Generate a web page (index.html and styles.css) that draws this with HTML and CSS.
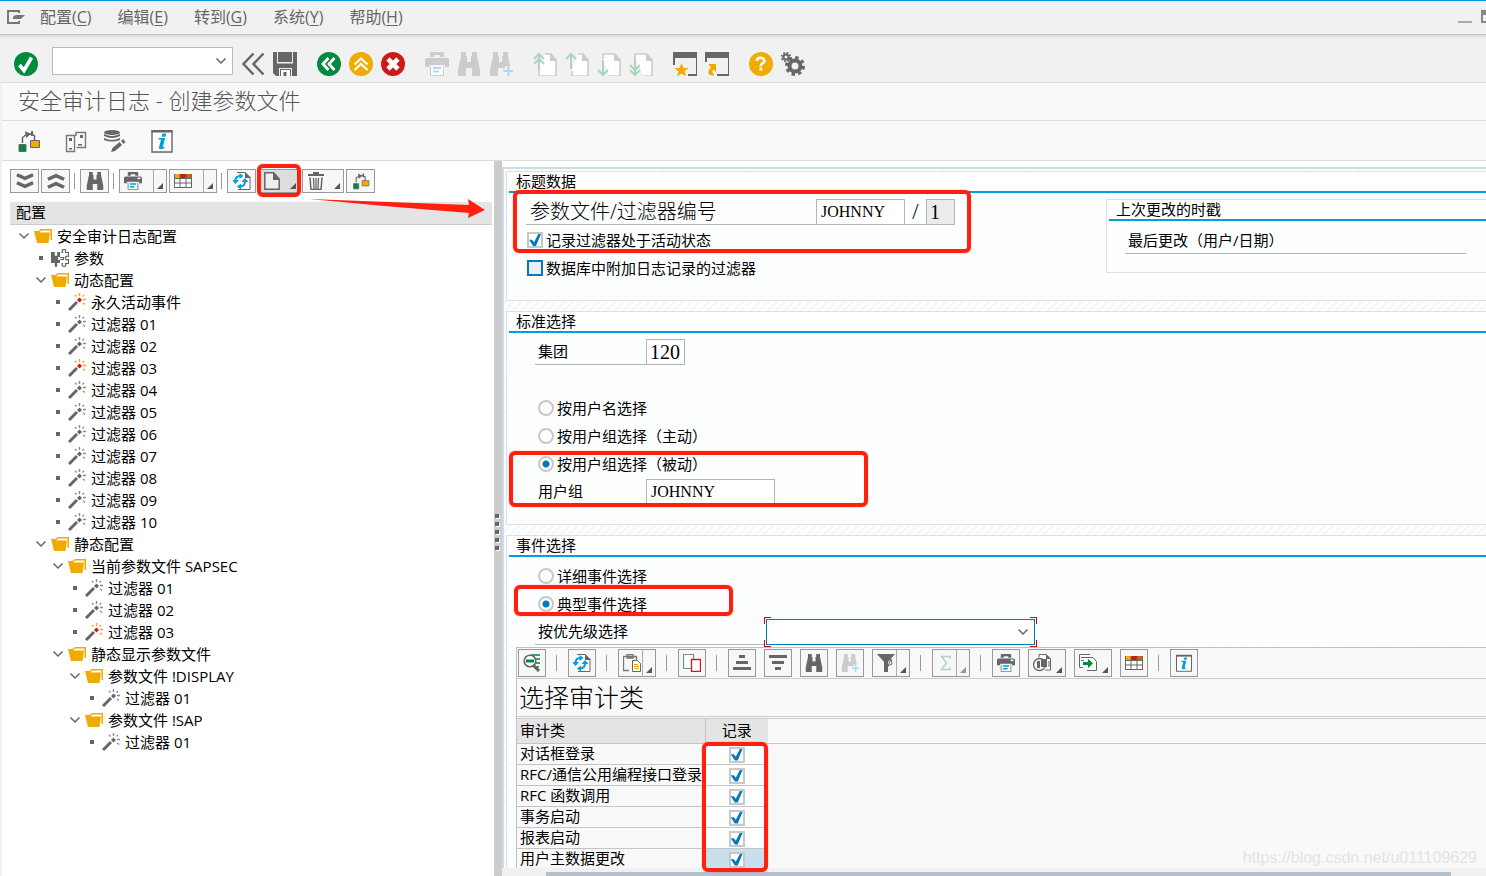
FILE: index.html
```html
<!DOCTYPE html>
<html lang="zh-CN">
<head>
<meta charset="utf-8">
<title>安全审计日志 - 创建参数文件</title>
<link rel="stylesheet" href="styles.css">
</head>
<body>
<svg class="sprite" aria-hidden="true">
  <symbol id="exit" viewBox="0 0 18 14"><path d="M12 1H1v12h11" fill="none" stroke="currentColor" stroke-width="2"/><path d="M12 0v3M12 11v3" stroke="currentColor" stroke-width="2"/><path d="M6 7q1-2 4-2h8l-4 4H6z" fill="currentColor"/></symbol>
  <symbol id="ok" viewBox="0 0 24 24"><circle cx="12" cy="12" r="12" fill="#008a3b"/><path d="M5.500 13l4.500 5.500L17.500 5.500" fill="none" stroke="#fff" stroke-width="3.600"/></symbol>
  <symbol id="first" viewBox="0 0 24 24"><path d="M12.500 1.500L2.500 12l10 10.500M22.500 1.500L12.500 12l10 10.500" fill="none" stroke="#666" stroke-width="2.500"/></symbol>
  <symbol id="save" viewBox="0 0 24 24"><path d="M0 0h4v11h16V0h4v24h-5v-8H6v8H3l-3-3z" fill="#666"/><path d="M5 0h14v10H5z" fill="#666"/><path d="M4 0h1v11H4zM19 0h1v11h-1zM4 10h16v1.500H4z" fill="#eee"/><path d="M7 17h11v7H7z" fill="#666"/><path d="M8 18h9v6H8z" fill="#fff"/><path d="M10.500 20h3v4h-3z" fill="#666"/></symbol>
  <symbol id="back" viewBox="0 0 24 24"><circle cx="12" cy="12" r="12" fill="#008a3b"/><path d="M11.500 6L6 12l5.500 6M17.500 6L12 12l5.500 6" fill="none" stroke="#fff" stroke-width="2.800"/></symbol>
  <symbol id="up" viewBox="0 0 24 24"><circle cx="12" cy="12" r="12" fill="#f0ab00"/><path d="M5.500 12.500L12 6.500l6.500 6M5.500 18L12 12l6.500 6" fill="none" stroke="#fff" stroke-width="2.300"/></symbol>
  <symbol id="cancel" viewBox="0 0 24 24"><circle cx="12" cy="12" r="12" fill="#cc1919"/><path d="M7 7l10 10M17 7L7 17" stroke="#fff" stroke-width="4.600"/></symbol>
  <symbol id="print" viewBox="0 0 24 24"><path d="M5 5V1.500Q5 0 6.500 0h11Q19 0 19 1.500V5h-4V3H9v2zM2 6h20q2 0 2 2v7h-4v-2H4v2H0V8q0-2 2-2z" fill="currentColor"/><path d="M18 7.500h4v2h-4z" fill="var(--dot,#fff)"/><path d="M5.500 14.500v9h13v-9" fill="#fff" stroke="currentColor"/><path d="M8 16h8M8 19.500h6" stroke="var(--accent,#009de0)" stroke-width="2"/></symbol>
  <symbol id="find" viewBox="0 0 24 24"><path d="M4 0h5v4h1v6h4V4h1V0h5v4l3 14v6h-8v-8h-6v8H1v-6L4 4z" fill="currentColor"/></symbol>
  <symbol id="findmore" viewBox="0 0 24 24"><path d="M4 0h5v4h1v6h3V4h1V0h5v4l2 10h-4l-3 4v-2H9v8H1v-6L4 4z" fill="currentColor"/><path d="M19.500 14v10M14.500 19h10" stroke="var(--accent,#009de0)" stroke-width="2"/></symbol>
  <symbol id="pg1" viewBox="0 0 24 24"><path d="M12 2h6l5 6v16H6V12" fill="#fff" stroke="#ccc" stroke-width="1.600"/><path d="M17 1v8h7z" fill="#ccc"/><path d="M6 17V2M1 7l5-5 5 5M1 12l5-5 5 5" fill="none" stroke="#a9d6bd" stroke-width="2"/></symbol>
  <symbol id="pg2" viewBox="0 0 24 24"><path d="M13 2h5l5 6v16H7v-5" fill="#fff" stroke="#ccc" stroke-width="1.600"/><path d="M17 1v8h7z" fill="#ccc"/><path d="M6 17V2M1 7l5-5 5 5" fill="none" stroke="#a9d6bd" stroke-width="2"/></symbol>
  <symbol id="pg3" viewBox="0 0 24 24"><path d="M6 7V2h12l5 6v16H12" fill="#fff" stroke="#ccc" stroke-width="1.600"/><path d="M17 1v8h7z" fill="#ccc"/><path d="M6 8v15M1 18l5 5 5-5" fill="none" stroke="#a9d6bd" stroke-width="2"/></symbol>
  <symbol id="pg4" viewBox="0 0 24 24"><path d="M6 7V2h12l5 6v16h-8" fill="#fff" stroke="#ccc" stroke-width="1.600"/><path d="M17 1v8h7z" fill="#ccc"/><path d="M6 7v16M1 13l5 5 5-5M1 18l5 5 5-5" fill="none" stroke="#a9d6bd" stroke-width="2"/></symbol>
  <symbol id="fav" viewBox="0 0 24 24"><path d="M0 0h25v6H0z" fill="#666"/><path d="M1 5v8M24 5v18h-9" fill="none" stroke="#666" stroke-width="2"/><path d="M8.500 11l2 5h5l-4 3.500 1.500 5-4.500-3-4.500 3 1.500-5-4-3.500h5z" fill="#f0ab00"/></symbol>
  <symbol id="shortcut" viewBox="0 0 24 24"><path d="M0 0h25v6H0z" fill="#666"/><path d="M1 5v5M24 5v18H12" fill="none" stroke="#666" stroke-width="2"/><path d="M3 12h8v8l-2.500-2.500Q6 20 9.500 23.500 2 24 3.500 18.500L6 15z" fill="#f0ab00"/></symbol>
  <symbol id="help" viewBox="0 0 24 24"><circle cx="12" cy="12" r="12" fill="#f0ab00"/><path d="M7.800 9Q8 5.800 11.500 5.800T15.500 8.800Q15.500 10.500 13.500 11.500T11.800 14.500" fill="none" stroke="#fff" stroke-width="2.600"/><path d="M10.400 15.800h2.900v2.700h-2.900z" fill="#fff"/></symbol>
  <symbol id="gear" viewBox="0 0 24 24"><circle cx="14" cy="14" r="5.500" fill="none" stroke="#666" stroke-width="4"/><circle cx="14" cy="14" r="8.500" fill="none" stroke="#666" stroke-width="3" stroke-dasharray="3.400 3.270"/><circle cx="5" cy="5" r="2.600" fill="none" stroke="#666" stroke-width="2"/><circle cx="5" cy="5" r="4.200" fill="none" stroke="#666" stroke-width="2" stroke-dasharray="1.650"/></symbol>
  <symbol id="move" viewBox="0 0 24 24"><path d="M5.500 14V8.500L10 5M17.500 11V6.500M10 5h5l3 2" fill="none" stroke="#666" stroke-width="1.500"/><path d="M8 2l6 3-5 4zM14 2h2v5h-2z" fill="#666"/><path d="M2 15.500h7v7H2z" fill="#008a3b" stroke="#666"/><path d="M13.500 11.500h9v7h-9z" fill="#f0ab00" stroke="#666"/></symbol>
  <symbol id="servers" viewBox="0 0 24 24"><path d="M2.500 6.500h8v16h-8zM12 7V3.500h9.500v15h-9" fill="none" stroke="#777" stroke-width="1.400"/><path d="M5 9h3v3H5zM5 19h3v1.500H5zM14 15h4v1.500h-4zM16 6h3v3h-3z" fill="#666"/></symbol>
  <symbol id="dbedit" viewBox="0 0 24 24"><ellipse cx="9" cy="3.500" rx="8" ry="2.500" fill="#666"/><path d="M1 5q8 4 16 0v2q-8 4-16 0zM1 9q8 4 16 0v2q-8 3-16 0z" fill="#666"/><path d="M8 23l1.500-4 7-6 2.500 3-7 6zM18 12l2-2 2.500 3-2 2z" fill="#666"/></symbol>
  <symbol id="info" viewBox="0 0 24 24"><path d="M2 2h20v21H2z" fill="#fff" stroke="#666" stroke-width="1.400"/><path d="M1.500 1h21v2.500h-21z" fill="#666"/><path d="M12.500 4.500h3.800l-.9 3.200h-3.800zM8.800 9h6.400l-2.500 9h1.800l-.4 1.500q-5 1.800-5.200-.8L11 10.500H8.500z" fill="#009de0"/></symbol>
  <symbol id="expand" viewBox="0 0 20 18"><path d="M1 2l9 4 9-4M1 11l9 4 9-4" fill="none" stroke="#666" stroke-width="3.800"/></symbol>
  <symbol id="collapse" viewBox="0 0 20 18"><path d="M1 7l9-4 9 4M1 16l9-4 9 4" fill="none" stroke="#666" stroke-width="3.800"/></symbol>
  <symbol id="grid" viewBox="0 0 18 14"><path d="M.5.5h17v13H.5z" fill="#fff" stroke="#666"/><path d="M0 0h6v4H0z" fill="#f0ab00"/><path d="M6 0h6v4H6z" fill="#cc1919"/><path d="M12 0h6v4h-6z" fill="#e05a00"/><path d="M0 4.500h18M0 9h18M6 0v14M12 0v14M.5 0v14M17.500 0v14" stroke="#666"/></symbol>
  <symbol id="refresh" viewBox="0 0 18 18"><path d="M4 .5h8l5 5v12H5" fill="#fff" stroke="#666"/><path d="M12 0v6h6z" fill="#666"/><path d="M2.500 9Q2.500 4 7 4M12 9q0 5-4 5.500" fill="none" stroke="#009de0" stroke-width="2"/><path d="M6.500 1l4 3-4 3zM-1 8l3.500 4L6 8zM8.500 10L12 6l3.500 4zM8 11.500v6l-4-3z" fill="#009de0"/></symbol>
  <symbol id="new" viewBox="0 0 16 18"><path d="M.8.800h9L15.200 7v10.200H.8z" fill="#eee" stroke="#666" stroke-width="1.500"/><path d="M9 0v8h7z" fill="#666"/></symbol>
  <symbol id="trash" viewBox="0 0 16 18"><path d="M0 2h5V0h6v2h5v2H0z" fill="#666"/><path d="M2 5.500l1 12h10l1-12" fill="none" stroke="#666" stroke-width="1.500"/><path d="M5.500 6l.5 11M8 6v11M10.500 6L10 17" stroke="#666" stroke-width="1.300"/></symbol>
  <symbol id="folder" viewBox="0 0 18 14"><path d="M5 2.500L7 .8h10.200V11" fill="none" stroke="#f0ab00" stroke-width="1.500"/><path d="M0 2h5l1 1.500h10L14.500 14H3z" fill="#f0ab00"/></symbol>
  <symbol id="wand" viewBox="0 0 18 18"><path d="M1 17l8-8" stroke="#666" stroke-width="3"/><path d="M11.500 4.500L14 7l-2.500 2.500L9 7z" fill="var(--tip,#666)"/><path d="M11.500 0v3M7 2l1.500 1.500M16 2l-1.500 1.500M15 6.500h3M15 10l2 1.500" stroke="var(--spark,#8a8a8a)" stroke-width="1.400"/></symbol>
  <symbol id="puzzle" viewBox="0 0 18 18"><path d="M0 3h4q-1 4 1 4t1-4h3v5H7v3h2v3H6q1 4-1 4t-1-4H0z" fill="#666"/><path d="M10.500 3.500h1q-1-3 1.500-3t1.500 3h3v4q-3-1-3 1.500t3 1.500v4h-3q1 3-1.500 3t-1.500-3h-1M9 8.500h3.500v2H9" fill="none" stroke="#666" stroke-width="1.200"/></symbol>
  <symbol id="detail" viewBox="0 0 18 18"><path d="M8 1h9M12 5h5M12 9h5M12 13h4" stroke="#008a3b" stroke-width="1.600"/><circle cx="7" cy="7" r="5.800" fill="#fff" stroke="#666" stroke-width="1.600"/><path d="M3 7h8" stroke="#008a3b" stroke-width="3"/><path d="M10 11l6 6" stroke="#666" stroke-width="3"/></symbol>
  <symbol id="paste" viewBox="0 0 18 18"><path d="M6 16.500H.5V2.500h13V6M4 4V.5h6V4z" fill="none" stroke="#777" stroke-width="1.300"/><path d="M9.500 6.500h5l3 3v8h-8z" fill="#fff" stroke="#666"/><path d="M11 10.500h4M11 12.500h5M11 14.500h5" stroke="#f0ab00"/></symbol>
  <symbol id="copy" viewBox="0 0 18 18"><path d="M.5.5h10v14H.5z" fill="#fff" stroke="#6d8f96" stroke-width="1.200"/><path d="M8.500 5.500h9v12h-9z" fill="#fff" stroke="#d01c1c" stroke-width="1.300"/></symbol>
  <symbol id="asc" viewBox="0 0 18 16"><path d="M6 1.500h6M3 7.500h12M0 13.500h18" stroke="#666" stroke-width="3"/></symbol>
  <symbol id="desc" viewBox="0 0 18 16"><path d="M6 13.500h6M3 7.500h12M0 1.500h18" stroke="#666" stroke-width="3"/></symbol>
  <symbol id="filter" viewBox="0 0 18 18"><path d="M0 0h18l-7 8v10H7V8z" fill="#666"/><path d="M14 5l-3 7 4-2z" fill="#fff" stroke="#666"/></symbol>
  <symbol id="sum" viewBox="0 0 18 18"><path d="M13 5V2.500H4.500L9.500 9l-5 6.500H13V13" fill="none" stroke="#a9d6bd" stroke-width="1.400"/></symbol>
  <symbol id="preview" viewBox="0 0 18 18"><path d="M6 3.500V.5h7L17.500 5v11H12" fill="#fff" stroke="#666"/><path d="M13 0v5h5zM8 5h6v8H8zM4 7h3v7H4z" fill="#666"/><path d="M15 8h2M15 10h2M15 12h2" stroke="#666"/><circle cx="6.500" cy="10.500" r="6" fill="none" stroke="#666" stroke-width="1.300"/></symbol>
  <symbol id="export" viewBox="0 0 18 18"><path d="M11 .5H.5v13H4" fill="#fff" stroke="#666"/><path d="M9 3.500h5l3.500 4v9H8" fill="#fff" stroke="#666"/><path d="M2 3.500h7M2 6.500h3" stroke="#666"/><path d="M4 8h5V5l5 4.500L9 14v-3H4z" fill="#008a3b"/></symbol>
  <symbol id="chev" viewBox="0 0 12 8"><path d="M1.500 1.500L6 6l4.500-4.500" fill="none" stroke="#666" stroke-width="1.500"/></symbol>
</svg>

<div class="app">
  <nav class="menubar" aria-label="菜单">
    <svg class="exit"><use href="#exit"/></svg>
    <button>配置(<u>C</u>)</button><button>编辑(<u>E</u>)</button><button>转到(<u>G</u>)</button><button>系统(<u>Y</u>)</button><button>帮助(<u>H</u>)</button>
    <span class="winbtns"><button class="min" aria-label="最小化"></button><button class="max" aria-label="还原"></button></span>
  </nav>

  <div class="toolbar">
    <button class="ib" aria-label="回车"><svg><use href="#ok"/></svg></button>
    <div class="combo command"><input aria-label="命令"><svg><use href="#chev"/></svg></div>
    <div class="tg"><button class="ib" aria-label="收起"><svg><use href="#first"/></svg></button><button class="ib" aria-label="保存"><svg><use href="#save"/></svg></button></div>
    <div class="tg"><button class="ib" aria-label="返回"><svg><use href="#back"/></svg></button><button class="ib" aria-label="退出"><svg><use href="#up"/></svg></button><button class="ib" aria-label="取消"><svg><use href="#cancel"/></svg></button></div>
    <div class="tg off"><button class="ib" aria-label="打印"><svg><use href="#print"/></svg></button><button class="ib" aria-label="查找"><svg><use href="#find"/></svg></button><button class="ib" aria-label="继续查找"><svg><use href="#findmore"/></svg></button></div>
    <div class="tg"><button class="ib" aria-label="首页"><svg><use href="#pg1"/></svg></button><button class="ib" aria-label="上一页"><svg><use href="#pg2"/></svg></button><button class="ib" aria-label="下一页"><svg><use href="#pg3"/></svg></button><button class="ib" aria-label="末页"><svg><use href="#pg4"/></svg></button></div>
    <div class="tg"><button class="ib" aria-label="新建会话"><svg><use href="#fav"/></svg></button><button class="ib" aria-label="快捷方式"><svg><use href="#shortcut"/></svg></button></div>
    <div class="tg"><button class="ib" aria-label="帮助"><svg><use href="#help"/></svg></button><button class="ib" aria-label="定制"><svg><use href="#gear"/></svg></button></div>
  </div>

  <h1 class="title">安全审计日志 - 创建参数文件</h1>

  <div class="apptools">
    <button class="ib wide" aria-label="激活"><svg><use href="#move"/></svg></button>
    <button class="ib" aria-label="服务器"><svg><use href="#servers"/></svg></button>
    <button class="ib wide" aria-label="编辑"><svg><use href="#dbedit"/></svg></button>
    <button class="ib" aria-label="信息"><svg><use href="#info"/></svg></button>
  </div>

  <main class="main">
    <section class="left">
      <div class="treetools">
        <button class="tb" aria-label="全部展开"><svg><use href="#expand"/></svg></button>
        <button class="tb" aria-label="全部折叠"><svg><use href="#collapse"/></svg></button>
        <i class="sep"></i>
        <button class="tb" aria-label="查找"><svg><use href="#find"/></svg></button>
        <i class="sep"></i>
        <button class="tb split" aria-label="打印"><svg><use href="#print"/></svg></button>
        <button class="tb split" aria-label="布局"><svg class="flat"><use href="#grid"/></svg></button>
        <i class="sep"></i>
        <button class="tb" aria-label="刷新"><svg><use href="#refresh"/></svg></button>
        <button class="tb drop pressed" aria-label="创建"><svg><use href="#new"/></svg></button>
        <button class="tb drop" aria-label="删除"><svg><use href="#trash"/></svg></button>
        <button class="tb" aria-label="激活"><svg><use href="#move"/></svg></button>
      </div>
      <div class="treehead">配置</div>
      <ul class="tree">
        <li class="l0"><button class="exp" aria-label="折叠"><svg><use href="#chev"/></svg></button><svg class="fold"><use href="#folder"/></svg>安全审计日志配置</li>
        <li class="l1"><i class="dot"></i><svg><use href="#puzzle"/></svg>参数</li>
        <li class="l1"><button class="exp" aria-label="折叠"><svg><use href="#chev"/></svg></button><svg class="fold"><use href="#folder"/></svg>动态配置</li>
        <li class="l2 active"><i class="dot"></i><svg><use href="#wand"/></svg>永久活动事件</li>
        <li class="l2"><i class="dot"></i><svg><use href="#wand"/></svg>过滤器 01</li>
        <li class="l2"><i class="dot"></i><svg><use href="#wand"/></svg>过滤器 02</li>
        <li class="l2 active"><i class="dot"></i><svg><use href="#wand"/></svg>过滤器 03</li>
        <li class="l2"><i class="dot"></i><svg><use href="#wand"/></svg>过滤器 04</li>
        <li class="l2"><i class="dot"></i><svg><use href="#wand"/></svg>过滤器 05</li>
        <li class="l2"><i class="dot"></i><svg><use href="#wand"/></svg>过滤器 06</li>
        <li class="l2"><i class="dot"></i><svg><use href="#wand"/></svg>过滤器 07</li>
        <li class="l2"><i class="dot"></i><svg><use href="#wand"/></svg>过滤器 08</li>
        <li class="l2"><i class="dot"></i><svg><use href="#wand"/></svg>过滤器 09</li>
        <li class="l2"><i class="dot"></i><svg><use href="#wand"/></svg>过滤器 10</li>
        <li class="l1"><button class="exp" aria-label="折叠"><svg><use href="#chev"/></svg></button><svg class="fold"><use href="#folder"/></svg>静态配置</li>
        <li class="l2"><button class="exp" aria-label="折叠"><svg><use href="#chev"/></svg></button><svg class="fold"><use href="#folder"/></svg>当前参数文件 SAPSEC</li>
        <li class="l3"><i class="dot"></i><svg><use href="#wand"/></svg>过滤器 01</li>
        <li class="l3"><i class="dot"></i><svg><use href="#wand"/></svg>过滤器 02</li>
        <li class="l3 active"><i class="dot"></i><svg><use href="#wand"/></svg>过滤器 03</li>
        <li class="l2"><button class="exp" aria-label="折叠"><svg><use href="#chev"/></svg></button><svg class="fold"><use href="#folder"/></svg>静态显示参数文件</li>
        <li class="l3"><button class="exp" aria-label="折叠"><svg><use href="#chev"/></svg></button><svg class="fold"><use href="#folder"/></svg>参数文件 !DISPLAY</li>
        <li class="l4"><i class="dot"></i><svg><use href="#wand"/></svg>过滤器 01</li>
        <li class="l3"><button class="exp" aria-label="折叠"><svg><use href="#chev"/></svg></button><svg class="fold"><use href="#folder"/></svg>参数文件 !SAP</li>
        <li class="l4"><i class="dot"></i><svg><use href="#wand"/></svg>过滤器 01</li>
      </ul>
    </section>

    <div class="splitter"><i></i><i></i><i></i><i></i><i></i></div>

    <section class="right">
      <div class="pane">
        <section class="group">
          <h2>标题数据</h2>
          <div class="body headgrid">
            <div class="headform">
              <div class="row profile"><label for="profile">参数文件/过滤器编号</label><input id="profile" class="name" value="JOHNNY"><span class="slash">/</span><input class="no num" aria-label="过滤器编号" value="1" readonly></div>
              <div class="row"><input type="checkbox" id="c1" checked><label for="c1">记录过滤器处于活动状态</label></div>
              <div class="row"><input type="checkbox" id="c2" class="focus"><label for="c2">数据库中附加日志记录的过滤器</label></div>
            </div>
            <section class="stamp">
              <h2>上次更改的时戳</h2>
              <p>最后更改（用户/日期）</p>
            </section>
          </div>
        </section>

        <section class="group">
          <h2>标准选择</h2>
          <div class="body sel">
            <div class="row field"><label for="client">集团</label><input id="client" class="client num" value="120"></div>
            <div class="row"></div>
            <div class="row radio"><input type="radio" name="who" id="r1"><label for="r1">按用户名选择</label></div>
            <div class="row radio"><input type="radio" name="who" id="r2"><label for="r2">按用户组选择（主动）</label></div>
            <div class="row radio"><input type="radio" name="who" id="r3" checked><label for="r3">按用户组选择（被动）</label></div>
            <div class="row field"><label for="ugroup">用户组</label><input id="ugroup" class="ugroup" value="JOHNNY"></div>
          </div>
        </section>

        <section class="group last">
          <h2>事件选择</h2>
          <div class="body sel events">
            <div class="row radio"><input type="radio" name="ev" id="e1"><label for="e1">详细事件选择</label></div>
            <div class="row radio"><input type="radio" name="ev" id="e2" checked><label for="e2">典型事件选择</label></div>
            <div class="row field prio"><label for="prio">按优先级选择</label><div class="focusbox"><div class="combo"><select id="prio"><option></option></select><svg><use href="#chev"/></svg></div></div></div>
          </div>
          <div class="alv">
            <div class="alvtools">
              <button class="tb" aria-label="详细"><svg><use href="#detail"/></svg></button>
              <i class="sep"></i>
              <button class="tb" aria-label="刷新"><svg><use href="#refresh"/></svg></button>
              <i class="sep"></i>
              <button class="tb split" aria-label="粘贴"><svg><use href="#paste"/></svg></button>
              <i class="sep"></i>
              <button class="tb" aria-label="复制"><svg><use href="#copy"/></svg></button>
              <i class="sep"></i>
              <button class="tb" aria-label="升序"><svg><use href="#asc"/></svg></button>
              <button class="tb" aria-label="降序"><svg><use href="#desc"/></svg></button>
              <button class="tb" aria-label="查找"><svg><use href="#find"/></svg></button>
              <button class="tb off" aria-label="继续查找"><svg><use href="#findmore"/></svg></button>
              <button class="tb split" aria-label="过滤"><svg><use href="#filter"/></svg></button>
              <i class="sep"></i>
              <button class="tb split dim" aria-label="合计"><svg><use href="#sum"/></svg></button>
              <i class="sep"></i>
              <button class="tb" aria-label="打印"><svg><use href="#print"/></svg></button>
              <button class="tb drop" aria-label="视图"><svg><use href="#preview"/></svg></button>
              <button class="tb drop" aria-label="导出"><svg><use href="#export"/></svg></button>
              <button class="tb" aria-label="布局"><svg class="flat"><use href="#grid"/></svg></button>
              <i class="sep"></i>
              <button class="tb" aria-label="信息"><svg><use href="#info"/></svg></button>
            </div>
            <h3>选择审计类</h3>
            <div class="tablewrap">
              <table>
                <thead><tr><th class="cls">审计类</th><th class="rec">记录</th><th class="rest"></th></tr></thead>
                <tbody>
                  <tr><td>对话框登录</td><td><input type="checkbox" aria-label="对话框登录" checked></td></tr>
                  <tr><td>RFC/通信公用编程接口登录</td><td><input type="checkbox" aria-label="RFC/通信公用编程接口登录" checked></td></tr>
                  <tr><td>RFC 函数调用</td><td><input type="checkbox" aria-label="RFC 函数调用" checked></td></tr>
                  <tr><td>事务启动</td><td><input type="checkbox" aria-label="事务启动" checked></td></tr>
                  <tr><td>报表启动</td><td><input type="checkbox" aria-label="报表启动" checked></td></tr>
                  <tr class="cur"><td>用户主数据更改</td><td><input type="checkbox" aria-label="用户主数据更改" checked></td></tr>
                </tbody>
              </table>
            </div>
          </div>
        </section>
      </div>
      <div class="hscroll"><i></i></div>
    </section>
  </main>

  <div class="marks" aria-hidden="true">
    <i class="mark m1"></i><i class="mark m2"></i><i class="mark m3"></i><i class="mark m4"></i><i class="mark m5"></i>
    <svg class="arrow" viewBox="0 0 178 22"><path d="M0 1l160 6-1-6 17 11-17 8 1-5L75 8z" fill="#ff2010"/></svg>
    <span class="watermark">https://blog.csdn.net/u011109629</span>
  </div>
</div>
</body>
</html>
```
FILE: styles.css
```css
* { box-sizing: border-box; }

body {
  margin: 0;
  font: 15px/20px "Open Sans", "Noto Sans CJK SC", sans-serif;
  color: #000;
  background: #f1f1f1;
}

button, input, select {
  margin: 0;
  padding: 0;
  border: 0;
  border-radius: 0;
  background: none;
  font: inherit;
  color: inherit;
  outline: 0;
}

svg { display: block; flex: none; overflow: visible; }
i { display: block; flex: none; }
.sprite { position: absolute; width: 0; height: 0; }

.app {
  position: relative;
  display: flex;
  flex-direction: column;
  height: 100vh;
  overflow: hidden;
  border-top: 1px solid #0097de;
}

/* menu bar */
.menubar {
  flex: none;
  display: flex;
  align-items: center;
  gap: 26px;
  height: 34px;
  padding: 0 0 2px 7px;
  border-bottom: 1px solid #c2c2c2;
  box-shadow: 0 2px 1px #ddd;
  font-size: 16px;
  color: #666;
}
.menubar .exit { width: 18px; height: 14px; margin-right: -11px; color: #777; }
.menubar u { text-underline-offset: 2px; text-decoration-thickness: 1px; }
.winbtns { display: flex; align-items: flex-end; gap: 9px; margin-left: auto; overflow: hidden; }
.min { width: 14px; height: 2px; background: #aaa; }
.max { width: 5px; height: 13px; border: 2px solid #888; border-top-width: 5px; border-right: 0; }

/* system toolbar */
.toolbar {
  flex: none;
  display: flex;
  align-items: flex-end;
  height: 48px;
  padding: 0 0 6px 14px;
  border-bottom: 1px solid #ddd;
}
.ib { width: 24px; height: 24px; flex: none; }
.ib svg { width: 24px; height: 24px; }
.tg { display: flex; gap: 8px; margin-right: 20px; color: #666; }
.off { --accent: #a8dcf4; --dot: #a8dcf4; color: #ccc; }
.off svg { color: #ccc; }
.combo { position: relative; display: flex; align-items: center; }
.combo input, .combo select { width: 100%; height: 100%; background: #fff; appearance: none; padding: 0 24px 0 4px; }
.combo svg { position: absolute; right: 5px; width: 12px; height: 8px; pointer-events: none; }
.command { width: 181px; height: 28px; margin: 0 8px 1px 14px; border: 1px solid #bbb; }

.title {
  flex: none;
  height: 38px;
  margin: 0 0 0 2px;
  padding-left: 16px;
  border-bottom: 1px solid #ddd;
  background: #f9f9f9;
  font-size: 22px;
  line-height: 35px;
  font-weight: 300;
  color: #555;
}
.apptools {
  flex: none;
  display: flex;
  align-items: center;
  gap: 15px;
  height: 40px;
  margin-left: 2px;
  padding-left: 15px;
  border-bottom: 1px solid #ddd;
  background: #f9f9f9;
}
.apptools .wide { margin-right: 8px; }

.main { flex: 1; display: flex; min-height: 0; }

/* tree panel */
.left { flex: 0 0 492px; margin-left: 2px; padding: 8px 2px 0 8px; background: #fff; overflow: hidden; }
.treetools { display: flex; gap: 2px; }
.tb {
  position: relative;
  flex: none;
  display: flex;
  align-items: center;
  justify-content: center;
  width: 29px;
  height: 24px;
  border: 1px solid #999;
  background: #f7f7f7;
  color: #666;
}
.tb svg { width: 18px; height: 18px; }
.tb svg.flat { height: 14px; }
.tb.split, .tb.drop { justify-content: flex-start; padding-left: 4px; }
.tb.split { width: 48px; }
.tb.drop { width: 42px; }
.tb.split::before { content: ""; position: absolute; right: 12px; top: 0; bottom: 0; width: 1px; background: #aaa; }
.tb.split::after, .tb.drop::after {
  content: "";
  position: absolute;
  right: 3px;
  bottom: 3px;
  border: 3px solid #555;
  border-top-color: transparent;
  border-left-color: transparent;
}
.tb.pressed { background: #ddd; }
.tb.dim::after { opacity: .6; }
.sep { width: 6px; align-self: center; height: 16px; background: linear-gradient(#999, #999) 2px 0 / 1px 100% no-repeat; }
.treehead { margin-top: 9px; padding: 0 6px 2px; border-bottom: 1px solid #ccc; background: #e4e4e4; }
.tree { margin: 0; padding: 0; list-style: none; }
.tree li { display: flex; align-items: center; height: 22px; white-space: pre; }
.tree svg { width: 18px; height: 18px; margin-right: 5px; }
.tree .fold { height: 14px; }
.exp, .dot { width: 19px; flex: none; }
.exp svg { width: 12px; height: 8px; margin-left: 3px; }
.dot { height: 4px; background: linear-gradient(#666, #666) 7px 0 / 4px 4px no-repeat; }
.l0 { padding-left: 5px; }
.l1 { padding-left: 22px; }
.l2 { padding-left: 39px; }
.l3 { padding-left: 56px; }
.l4 { padding-left: 73px; }
.active { --tip: #e01010; --spark: #f0ab00; }

.splitter { flex: 0 0 8px; display: flex; flex-direction: column; gap: 4px; padding: 353px 0 0 1px; background: #ccc; overflow: hidden; }
.splitter i { width: 4px; height: 4px; background: #666; box-shadow: 1px 1px #fff; }

/* detail panel */
.right { flex: 1; min-width: 0; display: flex; flex-direction: column; padding-top: 6px; background: #fff; overflow: hidden; }
.pane {
  flex: 1;
  min-height: 0;
  display: flex;
  flex-direction: column;
  gap: 10px;
  padding: 2px 0 0 2px;
  border: solid #cddceb;
  border-width: 2px 0 0 2px;
  background: repeating-linear-gradient(135deg, #fff 0 3px, #f4f9fc 3px 6px);
  overflow: hidden;
}
.group, .stamp { border: 1px solid #e0e0e0; border-right: 0; background: #fdfefe; }
.group h2, .stamp h2 {
  margin: 0 0 0 2px;
  padding: 0 0 0 7px;
  border-bottom: 2px solid #009de0;
  font-size: 15px;
  line-height: 19px;
  font-weight: 400;
}
.group h2 { background: #fff; }
.body { padding: 5px 0 18px; }
.row { display: flex; align-items: center; height: 28px; white-space: nowrap; }
.headgrid { display: grid; grid-template-columns: 599px 1fr; }
.headform { padding-left: 19px; }
.headform .row { padding-left: 1px; gap: 3px; }
.headform .profile { padding: 0; gap: 0; }
.profile label, .profile .slash { height: 26px; border-bottom: 1px solid #b5b5b5; line-height: 25px; }
.profile label { width: 290px; padding-left: 4px; font-size: 20px; font-weight: 300; }
.profile .slash { width: 21px; text-align: center; font-size: 20px; font-weight: 300; }
.profile input, .field input { height: 26px; padding: 0 4px; border: 1px solid #b5b5b5; background: #fff; font-family: "Liberation Serif", serif; font-size: 16px; }
.profile .num, .field .num { padding: 0 3px; font-size: 20px; }
.profile .name { width: 89px; }
.profile .no { width: 29px; background: #ececec; }
.stamp { margin-top: 1px; height: 74px; }
.stamp p { margin: 7px 20px 0 18px; padding: 2px 0 3px 3px; border-bottom: 1px solid #b5b5b5; }

input[type="checkbox"] { appearance: none; flex: none; width: 16px; height: 16px; border: 2px solid #c8c8c8; background: #fff; }
input[type="checkbox"]:checked::before {
  content: "";
  display: block;
  width: 12px;
  height: 12px;
  background: #0079bd;
  clip-path: polygon(0 48%, 25% 48%, 42% 68%, 78% 0, 100% 0, 58% 100%, 34% 100%);
}
input.focus { border-color: #0079bd; background: #eaeef2; }
input[type="radio"] { appearance: none; flex: none; width: 16px; height: 16px; border: 2px solid #c8c8c8; border-radius: 50%; background: #fff; }
input[type="radio"]:checked { background: radial-gradient(circle, #0079bd 3px, #fff 4px); }
.sel { padding-left: 28px; }
.radio { gap: 3px; padding-left: 3px; }
.field label { width: 111px; height: 26px; padding-left: 3px; border-bottom: 1px solid #b5b5b5; line-height: 25px; }
.field .client { width: 39px; }
.field .ugroup { width: 129px; }
.prio label { width: 229px; }
.focusbox {
  width: 273px;
  height: 30px;
  padding: 2px;
  background:
    linear-gradient(#d00, #d00) 0 0 / 7px 1px, linear-gradient(#d00, #d00) 0 0 / 1px 7px,
    linear-gradient(#d00, #d00) 100% 0 / 7px 1px, linear-gradient(#d00, #d00) 100% 0 / 1px 7px,
    linear-gradient(#d00, #d00) 0 100% / 7px 1px, linear-gradient(#d00, #d00) 0 100% / 1px 7px,
    linear-gradient(#d00, #d00) 100% 100% / 7px 1px, linear-gradient(#d00, #d00) 100% 100% / 1px 7px;
  background-repeat: no-repeat;
}
.focusbox .combo { height: 26px; border: 1px solid #0079bd; }
.events { padding-bottom: 1px; }
.last { flex: 1; display: flex; flex-direction: column; border-bottom: 0; background: rgba(252, 254, 255, .8); }

/* audit class grid */
.alv { flex: 1; display: flex; flex-direction: column; margin-left: 9px; border: solid #c0c0c0; border-width: 1px 0 0 1px; background: #f9f9f9; }
.alvtools { display: flex; gap: 8px; padding: 1px; border-bottom: 1px solid #ccc; }
.alvtools .tb { width: 28px; height: 28px; }
.alvtools .split, .alvtools .drop { width: 38px; }
.alv h3 { margin: 0; padding: 0 2px; border-bottom: 1px solid #ccc; font-size: 25px; line-height: 37px; font-weight: 300; }
.tablewrap { margin-top: 1px; border-top: 1px solid #ccc; }
table { width: 100%; border-collapse: collapse; table-layout: fixed; }
th, td { height: 21px; padding: 0 3px; border-bottom: 1px solid #c4c4c4; font-weight: 400; line-height: 18px; text-align: left; vertical-align: top; white-space: nowrap; }
th { height: 24px; line-height: 23px; background: #e4e4e4; }
td:first-child, .cls { border-right: 1px solid #c4c4c4; }
.cls { width: 188px; }
.rec { width: 63px; text-align: center; }
.rest { background: #f9f9f9; }
td + td { background: #fff; }
td + td input { margin: 3px auto 0; display: block; }
.cur td + td { background: #c9dfec; }
.hscroll { flex: none; height: 8px; padding: 4px 35px 0 44px; background: #f1f1f1; }
.hscroll i { height: 4px; background: #b6c0cc; }

/* annotation overlay */
.marks { position: absolute; inset: -1px 0 0 0; pointer-events: none; }
.mark { position: absolute; border: 4px solid #ff2010; border-radius: 6px; box-shadow: 0 0 1px #ff2010; }
.m1 { left: 257px; top: 164px; width: 44px; height: 33px; }
.m2 { left: 513px; top: 190px; width: 458px; height: 63px; }
.m3 { left: 509px; top: 451px; width: 359px; height: 56px; }
.m4 { left: 514px; top: 585px; width: 219px; height: 31px; }
.m5 { left: 702px; top: 742px; width: 66px; height: 130px; }
.arrow { position: absolute; left: 309px; top: 198px; width: 178px; height: 22px; }
.watermark { position: absolute; right: 9px; bottom: 8px; font: 16px/20px "Liberation Sans", sans-serif; color: #e4e4e4; }
```
